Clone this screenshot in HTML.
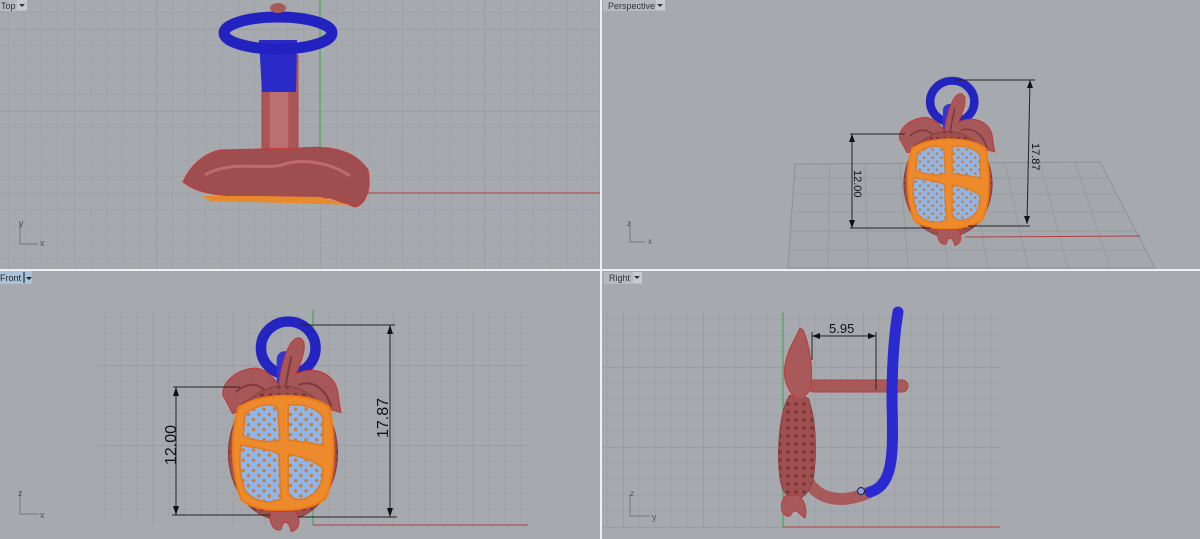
<!DOCTYPE html>
<html><head><meta charset="utf-8"><style>
html,body{margin:0;padding:0;width:1200px;height:539px;overflow:hidden;background:#a6aaae;font-family:"Liberation Sans",sans-serif}
svg{display:block}
</style></head><body>
<svg width="1200" height="539" viewBox="0 0 1200 539" xmlns="http://www.w3.org/2000/svg">
<defs>
<pattern id="g" width="82" height="82" patternUnits="userSpaceOnUse" x="320" y="193">
<path d="M16.4 0V82M32.8 0V82M49.2 0V82M65.6 0V82M0 16.4H82M0 32.8H82M0 49.2H82M0 65.6H82" stroke="#a0a4a9" stroke-width="1" fill="none"/>
<path d="M0 0V82M0 0H82" stroke="#92969b" stroke-width="1" fill="none"/>
</pattern>
<pattern id="g2" width="80" height="80" patternUnits="userSpaceOnUse" x="313" y="525">
<path d="M16 0V80M32 0V80M48 0V80M64 0V80M0 16H80M0 32H80M0 48H80M0 64H80" stroke="#9ea2a7" fill="none"/>
<path d="M0 0V80M0 0H80" stroke="#8e9297" fill="none"/>
</pattern>
<pattern id="g3" width="80" height="80" patternUnits="userSpaceOnUse" x="783" y="527">
<path d="M16 0V80M32 0V80M48 0V80M64 0V80M0 16H80M0 32H80M0 48H80M0 64H80" stroke="#9ea2a7" fill="none"/>
<path d="M0 0V80M0 0H80" stroke="#8e9297" fill="none"/>
</pattern>
<pattern id="seed" width="10" height="10" patternUnits="userSpaceOnUse">
<rect width="10" height="10" fill="#8fb6ea"/>
<circle cx="2" cy="2" r="1.6" fill="#d27a2a"/>
<circle cx="7" cy="7" r="1.6" fill="#d27a2a"/>
</pattern>
<pattern id="pits" width="8" height="8" patternUnits="userSpaceOnUse">
<rect width="8" height="8" fill="#9e5050"/>
<circle cx="4" cy="4" r="1.8" fill="#7a3434"/>
</pattern>
<g id="pom">
<circle cx="5" cy="-98" r="26" fill="none" stroke="#2424c0" stroke-width="10"/>
<rect x="-6" y="-95" width="16" height="50" rx="8" fill="#3434d0"/>
<path d="M-55 -48 C-62 -55 -52 -75 -30 -78 C-20 -80 -8 -70 -4 -60 C-2 -80 5 -108 15 -108 C24 -106 20 -90 12 -72 C30 -82 50 -72 52 -55 L55 -35 L30 -42 L0 -45 L-30 -40 L-48 -34 Z" fill="#a65858" stroke="#c33a3a" stroke-width="1.2"/>
<path d="M-45 -55 C-30 -68 -18 -62 -10 -45 M15 -62 C30 -68 42 -55 46 -40 M-40 -42 C-28 -52 -14 -48 -6 -38 M8 -90 C5 -75 2 -60 0 -45" stroke="#7e3b3b" stroke-width="2" fill="none"/>
<ellipse cx="0" cy="5" rx="52" ry="66" fill="url(#pits)" stroke="#8a4040"/>
<path d="M-42 -40 C-20 -55 25 -55 44 -40 C50 -10 50 30 40 50 C20 65 -25 65 -40 50 C-50 20 -50 -15 -42 -40Z" fill="#ec8a2c" stroke="#f07a10" stroke-width="2"/>
<path d="M-36 -34 C-22 -44 -8 -44 -5 -38 L-3 -8 C-15 -4 -30 -8 -38 -12 Z" fill="url(#seed)" stroke="#e07a20" stroke-width="1.5"/>
<path d="M5 -42 C20 -44 34 -38 38 -30 L38 -2 C28 -6 15 -6 5 -8 Z" fill="url(#seed)" stroke="#e07a20" stroke-width="1.5"/>
<path d="M-40 -3 C-25 0 -10 2 -4 6 L-2 50 C-15 56 -28 52 -36 42 C-42 25 -42 10 -40 -3Z" fill="url(#seed)" stroke="#e07a20" stroke-width="1.5"/>
<path d="M5 6 C20 9 30 13 38 20 C38 35 33 45 20 50 C12 52 7 48 5 44Z" fill="url(#seed)" stroke="#e07a20" stroke-width="1.5"/>
<path d="M-12 62 C-14 75 -8 82 -2 80 C0 70 5 70 8 82 C15 80 18 72 12 62Z" fill="#a85a5a" stroke="#c03838"/>
</g>
</defs>

<!-- Top viewport -->
<rect x="0" y="0" width="600" height="269" fill="url(#g)"/>
<line x1="320" y1="0" x2="320" y2="193" stroke="#3aa43a"/>
<line x1="320" y1="193" x2="600" y2="193" stroke="#b04040"/>
<rect x="262" y="55" width="36" height="100" fill="#a65858" stroke="#c04040"/>
<rect x="269" y="45" width="20" height="120" fill="#b87070" stroke="#c04040"/>
<path d="M259 40 L262 92 L296 92 L297 40Z" fill="#2a2ac8"/>
<ellipse cx="278" cy="33" rx="54" ry="16" fill="none" stroke="#2222c0" stroke-width="11"/>
<ellipse cx="278" cy="8" rx="8" ry="5" fill="#a85a5a"/>
<path d="M183 182 C190 165 205 153 220 150 L300 148 C330 145 355 150 368 170 C372 190 365 205 355 207 L330 198 C300 198 270 196 240 196 C215 196 195 192 183 182Z" fill="#9e4e4e" stroke="#c83a3a"/>
<path d="M202 196 L260 196 L320 197 L350 205 C300 203 240 202 210 201Z" fill="#e88a2c"/>
<path d="M205 175 C230 160 260 170 282 165 C300 158 330 162 350 176" stroke="#c06a6a" stroke-width="3" fill="none"/>
<path d="M20 222 V244 H38" stroke="#777" fill="none"/><text x="19" y="226" font-size="9" fill="#555">y</text><text x="40" y="246" font-size="9" fill="#555">x</text>
<rect x="0" y="0" width="27" height="11" fill="#b6babe"/><text x="1" y="9" font-size="9" fill="#333">Top</text>
<rect x="17" y="0" width="10" height="10" fill="#c8ccd0"/><path d="M19 4h6l-3 3z" fill="#333"/>

<!-- Perspective viewport -->
<path d="M795 164 L1100 162 L1155 268 L788 268Z" fill="#a4a8ac" stroke="#8e9297"/>
<g stroke="#979ba0" fill="none">
<path d="M795 178 H1107 M794 194 H1115 M793 212 H1125 M791 231 H1135 M790 250 H1145"/>
<path d="M830 164 L828 268 M865 164 L868 268 M900 164 L908 268 M935 164 L948 268 M970 164 L988 268 M1005 163 L1028 268 M1040 163 L1068 268 M1075 162 L1110 268"/>
</g>
<line x1="965" y1="237" x2="1140" y2="236" stroke="#b04040"/>
<use href="#pom" transform="translate(948,180) scale(0.85,0.8)"/>
<g stroke="#222" fill="none" stroke-width="1">
<path d="M850 134 H905 M852 134 V228 M850 228 H930 M955 80 H1035 M1030 80 L1027 224 M968 226 H1030"/>
</g>
<path d="M852 134 l-3 8 h6z M852 228 l-3 -8 h6z M1030 80 l-3 8 h6z M1027 224 l-3 -8 h6z" fill="#111"/>
<text x="0" y="0" font-size="11" fill="#111" transform="translate(854,170) rotate(90)">12.00</text>
<text x="0" y="0" font-size="11" fill="#111" transform="translate(1032,143) rotate(90)">17.87</text>
<path d="M630 222 V242 H645" stroke="#777" fill="none"/><text x="627" y="226" font-size="8" fill="#555">z</text><text x="648" y="244" font-size="8" fill="#555">x</text>
<rect x="603" y="0" width="62" height="11" fill="#b6babe"/><text x="608" y="9" font-size="9" fill="#333">Perspective</text>
<rect x="656" y="0" width="9" height="10" fill="#c8ccd0"/><path d="M657 4h6l-3 3z" fill="#333"/>

<!-- Front viewport -->
<rect x="97" y="310" width="431" height="215" fill="url(#g2)"/>
<line x1="313" y1="310" x2="313" y2="525" stroke="#3aa43a"/>
<line x1="313" y1="525" x2="528" y2="525" stroke="#b04040"/>
<use href="#pom" transform="translate(283,448) scale(1.05,1.02)"/>
<g stroke="#222" fill="none">
<path d="M173 387 H240 M176 387 V515 M172 515 H270 M300 325 H395 M390 325 V517 M298 517 H397"/>
</g>
<path d="M176 387 l-3 9 h6z M176 515 l-3 -9 h6z M390 325 l-3 9 h6z M390 517 l-3 -9 h6z" fill="#111"/>
<text font-size="16" fill="#111" transform="translate(176,465) rotate(-90)">12.00</text>
<text font-size="16" fill="#111" transform="translate(388,438) rotate(-90)">17.87</text>
<path d="M20 492 V514 H39" stroke="#777" fill="none"/><text x="18" y="496" font-size="9" fill="#555">z</text><text x="40" y="518" font-size="9" fill="#555">x</text>
<rect x="0" y="271" width="32" height="13" fill="#a7c3dc"/><text x="0" y="281" font-size="9" fill="#222">Front</text>
<line x1="24" y1="272" x2="24" y2="283" stroke="#111"/><path d="M26 277h6l-3 3z" fill="#222"/>

<!-- Right viewport -->
<rect x="603" y="312" width="397" height="218" fill="url(#g3)"/>
<line x1="783" y1="312" x2="783" y2="527" stroke="#3aa43a"/>
<line x1="783" y1="527" x2="1000" y2="527" stroke="#b04040"/>
<rect x="808" y="380" width="100" height="12" rx="6" fill="#a85a5a" stroke="#b04040"/>
<path d="M805 475 C815 500 840 505 870 492" stroke="#a85a5a" stroke-width="12" fill="none"/>
<path d="M870 492 C895 485 893 450 892 400 C892 360 895 330 898 312" stroke="#2a2ad0" stroke-width="11" fill="none" stroke-linecap="round"/>
<circle cx="861" cy="491" r="3.5" fill="#8fa0e0" stroke="#223"/>
<path d="M790 395 C778 410 775 470 783 490 C792 505 808 500 813 480 C818 450 815 415 808 398Z" fill="url(#pits)" stroke="#904040"/>
<path d="M800 328 C795 340 788 348 785 365 C782 380 790 398 802 400 L810 390 C814 375 810 345 803 330Z" fill="#a85a5a" stroke="#c03838"/>
<path d="M785 496 C778 505 782 518 790 516 C795 505 800 515 805 518 C808 508 803 498 798 495Z" fill="#a85a5a" stroke="#c03838"/>
<g stroke="#222" fill="none"><path d="M812 332 V360 M876 332 V390 M812 336 H876"/></g>
<path d="M812 336 l8 -3 v6z M876 336 l-8 -3 v6z" fill="#111"/>
<text x="829" y="333" font-size="13" fill="#111">5.95</text>
<path d="M630 494 V516 H650" stroke="#777" fill="none"/><text x="630" y="496" font-size="8" fill="#555">z</text><text x="652" y="520" font-size="9" fill="#555">y</text>
<rect x="604" y="272" width="38" height="12" fill="#b6babe"/><text x="609" y="281" font-size="9" fill="#333">Right</text>
<rect x="633" y="272" width="9" height="11" fill="#c8ccd0"/><path d="M634 276h6l-3 3z" fill="#333"/>

<!-- separators -->
<rect x="600" y="0" width="2" height="539" fill="#eef0f2"/>
<rect x="0" y="269" width="1200" height="2" fill="#eef0f2"/>
</svg>
</body></html>
